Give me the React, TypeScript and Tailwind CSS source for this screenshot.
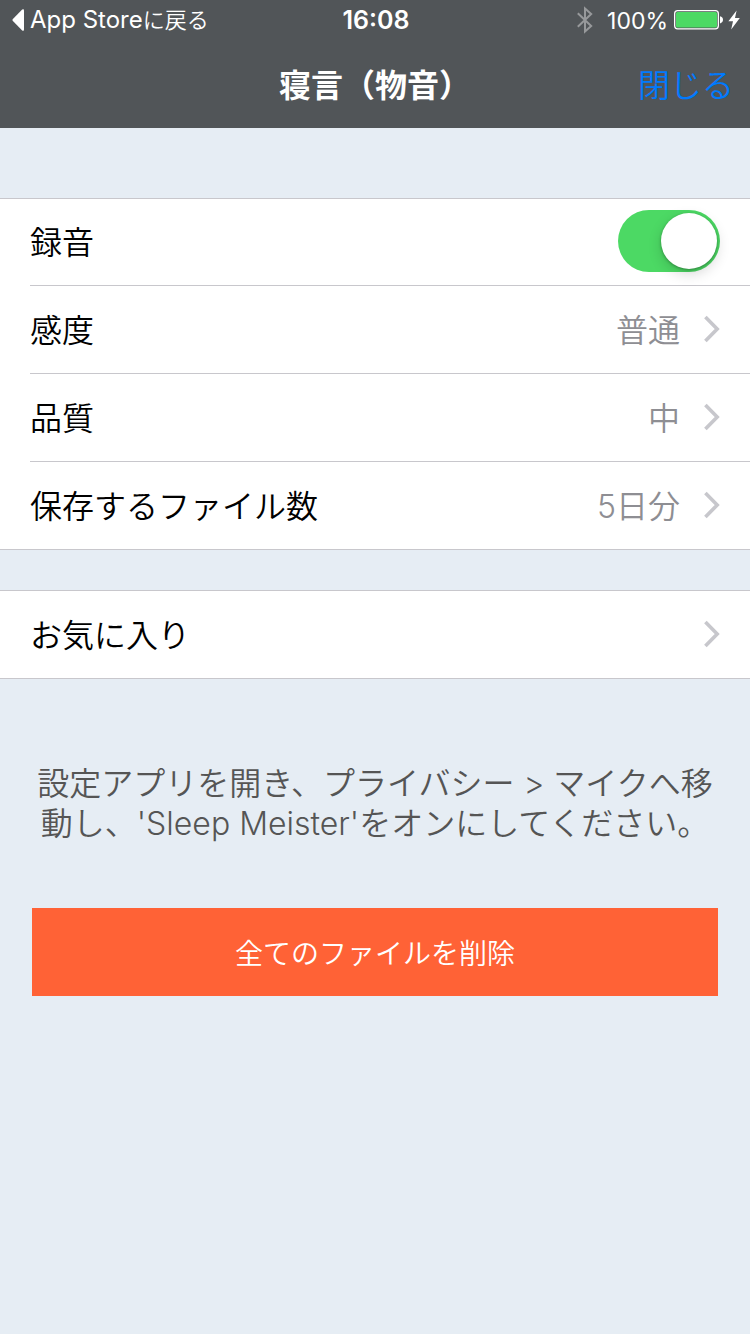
import { useState, type ReactNode } from "react";

function BackTriangle() {
  return (
    <svg width="12" height="22" viewBox="0 0 12 22" className="shrink-0" aria-hidden="true">
      <path d="M10.2 0.6 Q12 -0.6 12 1.6 V20.4 Q12 22.6 10.2 21.4 L0.9 12 Q0 11 0.9 10 Z" fill="#fff" />
    </svg>
  );
}

function Bluetooth() {
  return (
    <svg width="16" height="28" viewBox="0 0 16 28" fill="none" stroke="#97999b" strokeWidth="2" aria-hidden="true">
      <path d="M0.8 7.2 L14.2 20 L8 25.6 V2.4 L14.2 8 L0.8 20.8" />
    </svg>
  );
}

function Battery() {
  return (
    <svg width="50" height="20" viewBox="0 0 50 20" aria-hidden="true">
      <rect x="0.65" y="0.65" width="43.7" height="18.2" rx="3" fill="none" stroke="#fff" strokeWidth="1.3" />
      <rect x="2" y="2" width="41" height="15.5" rx="1.6" fill="#4cd964" />
      <path d="M46 6.2 Q49 7 49 9.8 Q49 12.6 46 13.4 Z" fill="#fff" />
    </svg>
  );
}

function Bolt() {
  return (
    <svg width="12" height="20" viewBox="0 0 12 20" aria-hidden="true">
      <path d="M8.6 0.4 L0.4 11.2 H5 L3.2 19.6 L11.8 8 H7 Z" fill="#fff" />
    </svg>
  );
}

function Chevron() {
  return (
    <svg width="16" height="28" viewBox="0 0 16 28" fill="none" stroke="#c7c7cc" strokeWidth="3.6" className="shrink-0" aria-hidden="true">
      <path d="M1.4 2 L13.2 14 L1.4 26" />
    </svg>
  );
}

function Section({ children }: { children: ReactNode }) {
  return <section className="border-b border-[#c8c7cc] bg-white pl-[30px]">{children}</section>;
}

function LinkRow({ label, value, divided }: { label: string; value?: string; divided?: boolean }) {
  return (
    <button
      type="button"
      className={
        "flex w-full items-center justify-between pr-[30px] pb-[2px] text-left text-[32px] leading-10 " +
        (divided ? "h-[88px] border-b border-[#c8c7cc]" : "h-[87px]")
      }
    >
      <span className="pt-1">{label}</span>
      <span className="flex items-center gap-6">
        {value && <span className="pt-1 text-[#8e8e93]">{value}</span>}
        <Chevron />
      </span>
    </button>
  );
}

export default function App() {
  const [recording, setRecording] = useState(true);

  return (
    <div
      lang="ja"
      className="min-h-screen bg-[#e6edf4] font-['Inter','Noto_Sans_CJK_JP',sans-serif] font-[350] text-black"
    >
      <header className="bg-[#515558] text-white">
        <div className="grid h-10 grid-cols-3 items-center pr-[10px] pl-3 text-2xl">
          <a href="#" className="flex items-center gap-[6px] whitespace-nowrap">
            <BackTriangle />
            <span className="font-normal">
              App Store<span className="text-[22px] font-[350]">に戻る</span>
            </span>
          </a>
          <span className="pt-[2px] text-center text-[25px] font-semibold">16:08</span>
          <div className="flex items-center justify-end">
            <Bluetooth />
            <span className="mr-[6px] ml-[14px] pt-[2px] text-[23px] font-normal">100%</span>
            <Battery />
            <span className="ml-1">
              <Bolt />
            </span>
          </div>
        </div>
        <div className="grid h-[88px] grid-cols-[1fr_auto_1fr] items-center px-4 pt-1 text-[32px]">
          <h1 className="col-start-2 font-semibold">寝言（物音）</h1>
          <button type="button" className="justify-self-end text-[#007aff]">
            閉じる
          </button>
        </div>
      </header>

      <main className="pt-[70px]">
        <div className="flex flex-col gap-10">
          <div className="border-t border-[#c8c7cc]">
            <Section>
              <label className="flex h-[87px] items-center justify-between border-b border-[#c8c7cc] pr-[30px] pb-[2px] text-[32px] leading-10">
                <span className="pt-1">録音</span>
                <input
                  type="checkbox"
                  role="switch"
                  checked={recording}
                  onChange={(e) => setRecording(e.target.checked)}
                  className="h-[62px] w-[102px] cursor-pointer appearance-none rounded-full bg-[#e5e5ea] p-[3px] transition-colors before:block before:size-14 before:rounded-full before:bg-white before:shadow-[0_5px_14px_rgba(0,0,0,0.16),0_1px_3px_rgba(0,0,0,0.3)] before:transition-[margin] checked:bg-[#4cd964] checked:before:ml-10"
                />
              </label>
              <LinkRow label="感度" value="普通" divided />
              <LinkRow label="品質" value="中" divided />
              <LinkRow label="保存するファイル数" value="5日分" />
            </Section>
          </div>
          <div className="border-t border-[#c8c7cc]">
            <Section>
              <LinkRow label="お気に入り" />
            </Section>
          </div>
        </div>

        <div className="px-8 pt-[85px]">
          <p className="text-center text-[32px] leading-10 text-[#555]">
            設定アプリを開き、プライバシー &gt; マイクへ移動し、'Sleep Meister'をオンにしてください。
          </p>
          <button type="button" className="mt-16 h-[88px] w-full bg-[#ff6236] pt-1 text-[28px] text-white">
            全てのファイルを削除
          </button>
        </div>
      </main>
    </div>
  );
}
